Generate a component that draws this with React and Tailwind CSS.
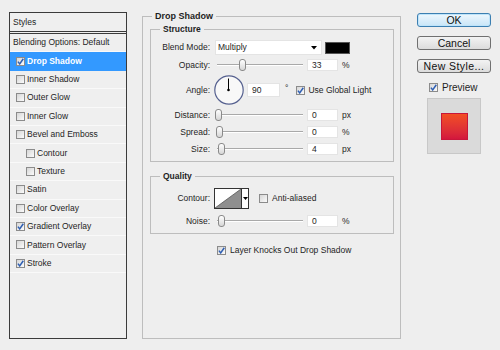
import React from "react";

const font = "font-['Liberation_Sans',Arial,sans-serif]";

function Check({ on }) {
  return (
    <span className="flex h-[9px] w-[9px] shrink-0 items-center justify-center border border-[#8b8b8b] bg-linear-to-br from-[#d6d6d6] to-[#fbfbfb]">
      {on && (
        <svg width="7" height="7" viewBox="0 0 7 7">
          <path d="M0.9 3.6 L2.7 5.9 L6.3 0.7" fill="none" stroke="#2f5fb3" strokeWidth="1.5" />
        </svg>
      )}
    </span>
  );
}

function Arrow() {
  return (
    <svg width="6" height="4" viewBox="0 0 6 4">
      <path d="M0 0 H6 L3 3.5 Z" fill="#000" />
    </svg>
  );
}

function Slider({ thumb }) {
  return (
    <div className="relative ml-[5px] h-[12px] w-[88px] shrink-0">
      <div className="absolute left-[2px] right-0 top-[5px] h-[2px] border-t border-b border-[#a9a9a9] border-b-white" />
      <div
        className={
          "absolute top-0 h-[12px] w-[7px] rounded-[3px] border border-[#8a8a8a] bg-linear-to-b from-white to-[#d6d6d6] " +
          thumb
        }
      />
    </div>
  );
}

function Field({ v }) {
  return (
    <div className="ml-[4px] flex h-[12px] w-[31px] shrink-0 items-center border border-[#e4e4e4] bg-white pl-[4px]">
      {v}
    </div>
  );
}

function Label({ children }) {
  return <span className="w-[59px] shrink-0 text-right">{children}</span>;
}

const styles = [
  { t: "Drop Shadow", on: true, sel: true },
  { t: "Inner Shadow" },
  { t: "Outer Glow" },
  { t: "Inner Glow" },
  { t: "Bevel and Emboss" },
  { t: "Contour", sub: true },
  { t: "Texture", sub: true },
  { t: "Satin" },
  { t: "Color Overlay" },
  { t: "Gradient Overlay", on: true },
  { t: "Pattern Overlay" },
  { t: "Stroke", on: true },
];

function LeftPanel() {
  return (
    <div className="ml-[9px] mt-[12px] flex h-[327px] w-[118px] shrink-0 flex-col border border-[#3b3b3b] bg-[#efefef]">
      <div className="flex h-[18px] shrink-0 items-center pl-[3px]">Styles</div>
      <div className="h-[3px] shrink-0 border-y border-[#3b3b3b]" />
      <div className="flex h-[18.4px] shrink-0 items-center border-b border-[#f9f9f9] pl-[3px]">
        Blending Options: Default
      </div>
      {styles.map((s) => (
        <div
          key={s.t}
          className={
            "flex h-[18.4px] shrink-0 items-center gap-[2px] border-b " +
            (s.sel ? "border-[#3399ff] bg-[#3399ff] font-bold text-white " : "border-[#f9f9f9] ") +
            (s.sub ? "pl-[16px]" : "pl-[6px]")
          }
        >
          <Check on={s.on} />
          <span>{s.t}</span>
        </div>
      ))}
    </div>
  );
}

function Main() {
  return (
    <fieldset className="ml-[15px] mt-[10px] h-[329px] w-[259px] shrink-0 border border-[#bdbdbd] pl-[7px] pr-[6px]">
      <legend className="ml-[2px] h-[12px] px-[3px] text-[9px] font-bold leading-[12px]">Drop Shadow</legend>

      <fieldset className="mt-[1px] w-[244px] border border-[#bdbdbd] pb-[6px]">
        <legend className="ml-[9px] h-[12px] px-[3px] font-bold leading-[12px]">Structure</legend>

        <div className="mt-[5px] flex h-[15px] items-center">
          <Label>Blend Mode:</Label>
          <div className="ml-[5px] flex h-[15px] w-[107px] shrink-0 items-center justify-between border border-[#e4e4e4] bg-white pl-[2px] pr-[4px]">
            <span>Multiply</span>
            <Arrow />
          </div>
          <div className="ml-[3px] h-[12px] w-[25px] shrink-0 border border-[#555] bg-black" />
        </div>

        <div className="mt-[4px] flex h-[12px] items-center">
          <Label>Opacity:</Label>
          <Slider thumb="left-[24px]" />
          <Field v="33" />
          <span className="ml-[4px]">%</span>
        </div>

        <div className="mt-[4px] flex h-[30px] items-center">
          <Label>Angle:</Label>
          <svg className="ml-[4px] shrink-0" width="30" height="30" viewBox="0 0 30 30">
            <circle cx="15" cy="15" r="14.2" fill="#f8f8f8" stroke="#55608f" strokeWidth="1.2" />
            <line x1="14.5" y1="15" x2="14.5" y2="3.5" stroke="#000" strokeWidth="1" />
            <circle cx="14.5" cy="15" r="1.3" fill="#000" />
          </svg>
          <div className="ml-[3px] flex h-[14px] w-[33px] shrink-0 items-center border border-[#e4e4e4] bg-white pl-[4px]">
            90
          </div>
          <span className="ml-[5px] -mt-[3px]">°</span>
          <span className="ml-[8px]">
            <Check on />
          </span>
          <span className="ml-[3px]">Use Global Light</span>
        </div>

        <div className="mt-[4px] flex h-[12px] items-center">
          <Label>Distance:</Label>
          <Slider thumb="left-0" />
          <Field v="0" />
          <span className="ml-[4px]">px</span>
        </div>

        <div className="mt-[5px] flex h-[12px] items-center">
          <Label>Spread:</Label>
          <Slider thumb="left-[1px]" />
          <Field v="0" />
          <span className="ml-[4px]">%</span>
        </div>

        <div className="mt-[5px] flex h-[12px] items-center">
          <Label>Size:</Label>
          <Slider thumb="left-[3px]" />
          <Field v="4" />
          <span className="ml-[4px]">px</span>
        </div>
      </fieldset>

      <fieldset className="mt-[8px] w-[244px] border border-[#bdbdbd] pb-[6px]">
        <legend className="ml-[9px] h-[12px] px-[3px] font-bold leading-[12px]">Quality</legend>

        <div className="mt-[6px] flex h-[21px] items-center">
          <Label>Contour:</Label>
          <div className="ml-[4px] flex h-[21px] w-[35px] shrink-0 border border-[#333] bg-white">
            <svg width="26" height="19" viewBox="0 0 26 19" className="shrink-0">
              <path d="M0 19 L26 0 L26 19 Z" fill="#8f8f8f" />
              <path d="M0 19 L26 0" stroke="#555" strokeWidth="0.8" />
            </svg>
            <div className="flex flex-1 items-center justify-center border-l border-[#333]">
              <svg width="5" height="3" viewBox="0 0 5 3">
                <path d="M0 0 H5 L2.5 3 Z" fill="#000" />
              </svg>
            </div>
          </div>
          <span className="ml-[10px]">
            <Check />
          </span>
          <span className="ml-[4px]">Anti-aliased</span>
        </div>

        <div className="mt-[6px] flex h-[12px] items-center">
          <Label>Noise:</Label>
          <Slider thumb="left-[3px]" />
          <Field v="0" />
          <span className="ml-[4px]">%</span>
        </div>
      </fieldset>

      <div className="mt-[11px] flex h-[10px] items-center pl-[67px]">
        <Check on />
        <span className="ml-[4px]">Layer Knocks Out Drop Shadow</span>
      </div>
    </fieldset>
  );
}

function Right() {
  const btn =
    "flex h-[14px] items-center justify-center rounded-[3px] border leading-none text-[10.5px] text-[#111]";
  return (
    <div className="ml-[16px] mt-[13px] flex w-[74px] shrink-0 flex-col">
      <div className={btn + " border-[#3c7fb1] bg-linear-to-b from-[#eef7fd] to-[#c9e6f8] shadow-[inset_0_0_0_1px_#bfe4fa]"}>
        OK
      </div>
      <div className={btn + " mt-[9px] border-[#707070] bg-linear-to-b from-[#f3f3f3] to-[#dcdcdc]"}>Cancel</div>
      <div className={btn + " mt-[9px] border-[#707070] bg-linear-to-b from-[#f3f3f3] to-[#dcdcdc] tracking-[0.4px]"}>
        New Style...
      </div>
      <div className="mt-[9px] flex h-[10px] items-center pl-[12px]">
        <Check on />
        <span className="ml-[4px] text-[10px]">Preview</span>
      </div>
      <div className="ml-[10px] mt-[6px] flex h-[56px] w-[54px] items-center justify-center border border-[#c8c8c8] bg-[#dadada]">
        <div className="h-[27px] w-[27px] border border-[#c8163a] bg-linear-to-b from-[#f24d22] to-[#d3163d]" />
      </div>
    </div>
  );
}

export default function App() {
  return (
    <div className={"flex h-[350px] w-[500px] items-start overflow-hidden bg-[#eeeeee] text-[8.5px] text-[#1e1e1e] " + font}>
      <LeftPanel />
      <Main />
      <Right />
    </div>
  );
}
